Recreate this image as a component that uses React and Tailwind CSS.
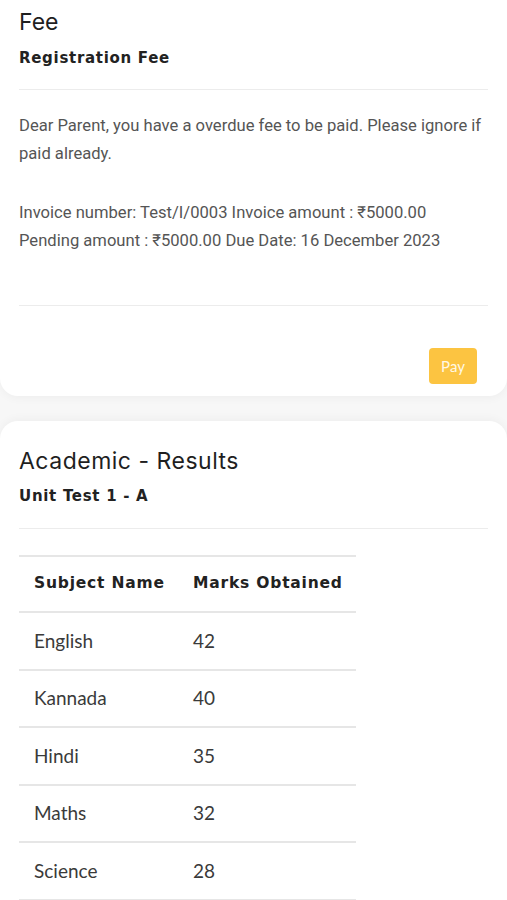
import { useState } from "react";

const results = [
  { subject: "English", marks: 42 },
  { subject: "Kannada", marks: 40 },
  { subject: "Hindi", marks: 35 },
  { subject: "Maths", marks: 32 },
  { subject: "Science", marks: 28 },
];

const heading = { fontFamily: "Inter, 'Noto Sans', sans-serif" };
const subHeading = { fontFamily: "'DejaVu Sans', 'Noto Sans', sans-serif" };

const App = () => {
  const [paid, setPaid] = useState(false);

  return (
    <div className="min-h-[900px] bg-[#f7f7f7] overflow-hidden">
      {/* Fee card */}
      <div className="bg-white rounded-b-[18px] shadow-[0_2px_10px_rgba(0,0,0,0.04)] px-[19px] pt-[6px] pb-[12px]">
        <h2 className="text-[23px] text-[#1f1f1f] leading-[32px]" style={heading}>Fee</h2>
        <h3 className="mt-[10px] text-[15px] font-bold tracking-[0.7px] text-[#222] leading-[20px]" style={subHeading}>
          Registration Fee
        </h3>
        <div className="mt-[21px] h-px bg-[#ececec]" />
        <div className="pt-[22px] text-[16.6px] leading-[28px] text-[#555]" style={{ fontFamily: "Roboto, sans-serif" }}>
          <p>Dear Parent, you have a overdue fee to be paid. Please ignore if paid already.</p>
          <p className="mt-[31px]">Invoice number: Test/I/0003 Invoice amount : ₹5000.00</p>
          <p>Pending amount : ₹5000.00 Due Date: 16 December 2023</p>
        </div>
        <div className="mt-[50px] h-px bg-[#ececec]" />
        <div className="flex justify-end pt-[42px] pr-[11px]">
          <button
            onClick={() => setPaid(!paid)}
            className="w-[48px] h-[36px] rounded-[4px] bg-[#fcc441] text-[#fff8e6] text-[15px]"
            style={{ fontFamily: "Lato, sans-serif" }}
          >
            Pay
          </button>
        </div>
      </div>

      {/* Results card */}
      <div className="mt-[25px] bg-white rounded-t-[18px] shadow-[0_-2px_10px_rgba(0,0,0,0.04)] px-[19px] pt-[25px]">
        <h2 className="text-[23px] tracking-[0.5px] text-[#1f1f1f] leading-[30px]" style={heading}>Academic - Results</h2>
        <h3 className="mt-[10px] text-[15px] font-bold tracking-[0.7px] text-[#222] leading-[20px]" style={subHeading}>
          Unit Test 1 - A
        </h3>
        <div className="mt-[22px] h-px bg-[#ececec]" />
        <table className="mt-[26px] w-[337px] border-collapse" style={{ fontFamily: "Lato, sans-serif" }}>
          <thead>
            <tr className="border-t-2 border-b-2 border-[#e6e6e6] h-[56px]">
              <th className="text-left pl-[15px] w-[174px] text-[15.5px] font-bold tracking-[0.8px] text-[#222] whitespace-nowrap" style={subHeading}>
                Subject Name
              </th>
              <th className="text-left text-[15.5px] font-bold tracking-[0.8px] text-[#222] whitespace-nowrap" style={subHeading}>
                Marks Obtained
              </th>
            </tr>
          </thead>
          <tbody>
            {results.map((r) => (
              <tr key={r.subject} className="border-b-2 border-[#e6e6e6] h-[57.5px]">
                <td className="pl-[15px] text-[19px] text-[#3a3a3a]">{r.subject}</td>
                <td className="text-[19px] text-[#3a3a3a]">{r.marks}</td>
              </tr>
            ))}
          </tbody>
        </table>
      </div>
    </div>
  );
};

export default App;
